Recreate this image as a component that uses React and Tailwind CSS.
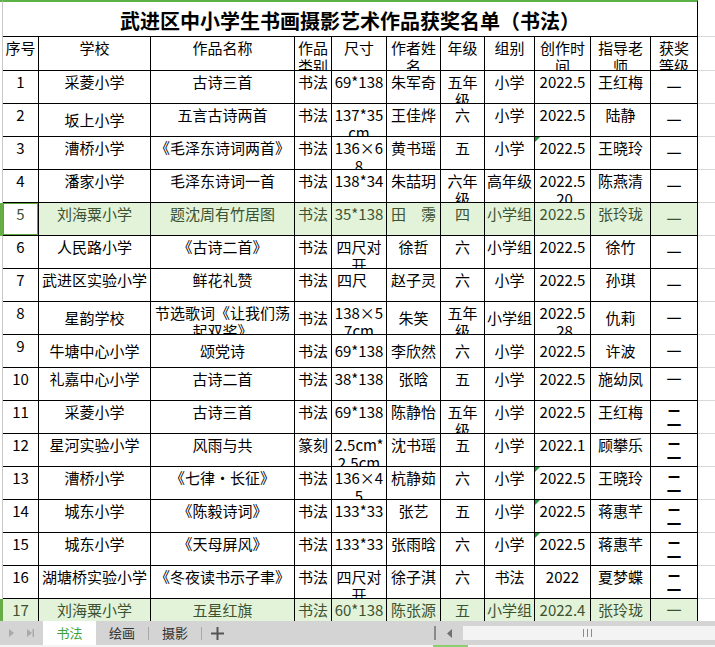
import React from "react";
import clsx from "clsx";

// column widths of the sheet, left to right
const colW = [
  "w-[36px]",
  "w-[112px]",
  "w-[144px]",
  "w-[37px]",
  "w-[55px]",
  "w-[54px]",
  "w-[44px]",
  "w-[50px]",
  "w-[56px]",
  "w-[60px]",
  "w-[47px]",
];

const header = ["序号", "学校", "作品名称", "作品\n类别", "尺寸", "作者姓\n名", "年级", "组别", "创作时\n间", "指导老\n师", "获奖\n等级"];

// mid = columns that are vertically centred, flag = green marker in 创作时间
const rows = [
  { c: ["1", "采菱小学", "古诗三首", "书法", "69*138", "朱军奇", "五年\n级", "小学", "2022.5", "王红梅", "一"], mid: [10] },
  { c: ["2", "坂上小学", "五言古诗两首", "书法", "137*35\ncm", "王佳烨", "六", "小学", "2022.5", "陆静", "一"], mid: [1, 10] },
  { c: ["3", "漕桥小学", "《毛泽东诗词两首》", "书法", "136×6\n8", "黄书瑶", "五", "小学", "2022.5", "王晓玲", "一"], mid: [10], flag: true },
  { c: ["4", "潘家小学", "毛泽东诗词一首", "书法", "138*34", "朱喆玥", "六年\n级", "高年级", "2022.5\n.20", "陈燕清", "一"], mid: [10] },
  { c: ["5", "刘海粟小学", "题沈周有竹居图", "书法", "35*138", "田　霶", "四", "小学组", "2022.5", "张玲珑", "一"], mid: [10], hl: true, active: true },
  { c: ["6", "人民路小学", "《古诗二首》", "书法", "四尺对\n开", "徐哲", "六", "小学组", "2022.5", "徐竹", "一"], mid: [10] },
  { c: ["7", "武进区实验小学", "鲜花礼赞", "书法", "四尺", "赵子灵", "六", "小学", "2022.5", "孙琪", "一"], mid: [10], left: [4] },
  { c: ["8", "星韵学校", "节选歌词《让我们荡\n起双桨》", "书法", "138×5\n7cm", "朱笑", "五年\n级", "小学组", "2022.5\n.28", "仇莉", "一"], mid: [1, 3, 5, 7, 9, 10] },
  { c: ["9", "牛塘中心小学", "颂党诗", "书法", "69*138", "李欣然", "六", "小学", "2022.5", "许波", "一"], mid: [1, 2, 3, 4, 5, 6, 7, 8, 9, 10] },
  { c: ["10", "礼嘉中心小学", "古诗二首", "书法", "38*138", "张晗", "五", "小学", "2022.5", "施幼凤", "一"], mid: [] },
  { c: ["11", "采菱小学", "古诗三首", "书法", "69*138", "陈静怡", "五年\n级", "小学", "2022.5", "王红梅", "二"], mid: [10] },
  { c: ["12", "星河实验小学", "风雨与共", "篆刻", "2.5cm*\n2.5cm", "沈书瑶", "五", "小学", "2022.1", "顾攀乐", "二"], mid: [10] },
  { c: ["13", "漕桥小学", "《七律•长征》", "书法", "136×4\n5", "杭静茹", "六", "小学", "2022.5", "王晓玲", "二"], mid: [10], flag: true },
  { c: ["14", "城东小学", "《陈毅诗词》", "书法", "133*33", "张艺", "五", "小学", "2022.5", "蒋惠芊", "二"], mid: [10], flag: true },
  { c: ["15", "城东小学", "《天母屏风》", "书法", "133*33", "张雨晗", "六", "小学", "2022.5", "蒋惠芊", "二"], mid: [10], flag: true },
  { c: ["16", "湖塘桥实验小学", "《冬夜读书示子聿》", "书法", "四尺对\n开", "徐子淇", "六", "书法", "2022", "夏梦蝶", "二"], mid: [10] },
  { c: ["17", "刘海粟小学", "五星红旗", "书法", "60*138", "陈张源", "五", "小学组", "2022.4", "张玲珑", "一"], mid: [], hl: true },
];

const Cell = ({ text, w, mid, left, active, flag }) => {
  const lines = text.split("\n");
  return (
    <div
      className={clsx(
        "relative shrink-0 h-full overflow-hidden border-r border-b border-black",
        w,
        mid ? "flex flex-col justify-center" : "pt-[2px]",
        active && "bg-white shadow-[inset_0_0_0_1px_#5fa83f]"
      )}
    >
      {flag && (
        <span className="absolute left-0 top-0 w-0 h-0 border-t-[5px] border-r-[5px] border-t-[#1f9a35] border-r-transparent" />
      )}
      {lines.map((l, i) =>
        l.includes("　") ? (
          <div key={i} className="flex justify-between px-[4px] whitespace-nowrap">
            {l.split("　").map((ch) => (
              <span key={ch}>{ch}</span>
            ))}
          </div>
        ) : (
          <div
            key={i}
            className={clsx("whitespace-nowrap", left && i === 0 ? "text-left pl-[5px]" : "text-center")}
          >
            {l === "二" ? <span className="inline-block scale-y-[1.55]">二</span> : l}
          </div>
        )
      )}
    </div>
  );
};

const Row = ({ cells, h, hl, mid = [], left = [], active, flag }) => (
  <div className={clsx("flex shrink-0", h)}>
    <div className={clsx("w-[3px] shrink-0 h-full", hl ? "bg-[#67ad47]" : "border-r border-[#c8c8c8]")} />
    <div className={clsx("flex h-full", hl ? "bg-[#e2f3d9] text-[#3d5231]" : "text-black")}>
      {cells.map((t, i) => (
        <Cell
          key={i}
          text={t}
          w={colW[i]}
          mid={mid.includes(i)}
          left={left.includes(i)}
          active={active && i === 0}
          flag={flag && i === 8}
        />
      ))}
    </div>
    <div className="w-[17px] shrink-0 h-full border-b border-[#d9d9d9]" />
  </div>
);

const Arrow = ({ bar }) => (
  <svg width="8" height="10" viewBox="0 0 8 10">
    <polygon points="1,1 6,5 1,9" fill="#a9a9a9" />
    {bar && <rect x="6.5" y="1" width="1.5" height="8" fill="#a9a9a9" />}
  </svg>
);

const SheetTabs = () => (
  <div className="h-[26px] shrink-0 flex flex-col">
    <div className="h-[24px] flex items-center bg-[#d4d4d4] text-[13px] text-[#333]">
      <div className="w-[43px] flex items-center gap-[10px] pl-[8px]">
        <Arrow />
        <Arrow bar />
      </div>
      <div className="w-[53px] h-full bg-white flex items-center justify-center text-[#3aa33a]">书法</div>
      <div className="w-[52px] text-center">绘画</div>
      <div className="w-px h-[13px] bg-[#a8a8a8]" />
      <div className="w-[52px] text-center">摄影</div>
      <div className="w-px h-[13px] bg-[#a8a8a8]" />
      <div className="w-[31px] flex justify-center">
        <svg width="13" height="13" viewBox="0 0 13 13">
          <rect x="0" y="5.5" width="13" height="2" fill="#555" />
          <rect x="5.5" y="0" width="2" height="13" fill="#555" />
        </svg>
      </div>
      <div className="flex-1" />
      <div className="w-[2px] h-[14px] bg-[#8a8a8a]" />
      <div className="w-[27px] flex justify-center">
        <svg width="6" height="9" viewBox="0 0 6 9">
          <polygon points="5,0 0,4.5 5,9" fill="#707070" />
        </svg>
      </div>
      <div className="w-[252px] h-[14px] bg-[#f3f3f3] flex items-center justify-center">
        <div className="flex gap-[3px] ml-[-4px]">
          <span className="w-px h-[8px] bg-[#8c8c8c]" />
          <span className="w-px h-[8px] bg-[#8c8c8c]" />
          <span className="w-px h-[8px] bg-[#8c8c8c]" />
        </div>
      </div>
    </div>
    <div className="h-[2px] bg-[#f4f4f4] flex">
      <div className="ml-[433px] w-[35px] bg-[#8ccf6c]" />
    </div>
  </div>
);

export default function App() {
  return (
    <div className="w-[715px] h-[647px] overflow-hidden bg-white flex flex-col font-['Noto_Sans_CJK_SC',sans-serif] text-[15px] leading-[18px]">
      <div className="h-[621px] overflow-hidden flex flex-col">
        <div className="flex h-[37px] shrink-0">
          <div className="w-[3px] shrink-0 border-t-2 border-t-[#5db247] border-r border-r-[#c8c8c8]" />
          <div className="w-[695px] shrink-0 border-t-2 border-t-[#5db247] border-r border-b border-r-black border-b-black flex items-center justify-center pt-[3px] text-[20px] font-bold text-black">
            武进区中小学生书画摄影艺术作品获奖名单（书法）
          </div>
          <div className="w-[17px] shrink-0 border-b border-[#d9d9d9]" />
        </div>
        <Row cells={header} h="h-[34px]" />
        {rows.map((r, i) => (
          <Row key={i} cells={r.c} h="h-[33px]" hl={r.hl} mid={r.mid} left={r.left} active={r.active} flag={r.flag} />
        ))}
      </div>
      <SheetTabs />
    </div>
  );
}
